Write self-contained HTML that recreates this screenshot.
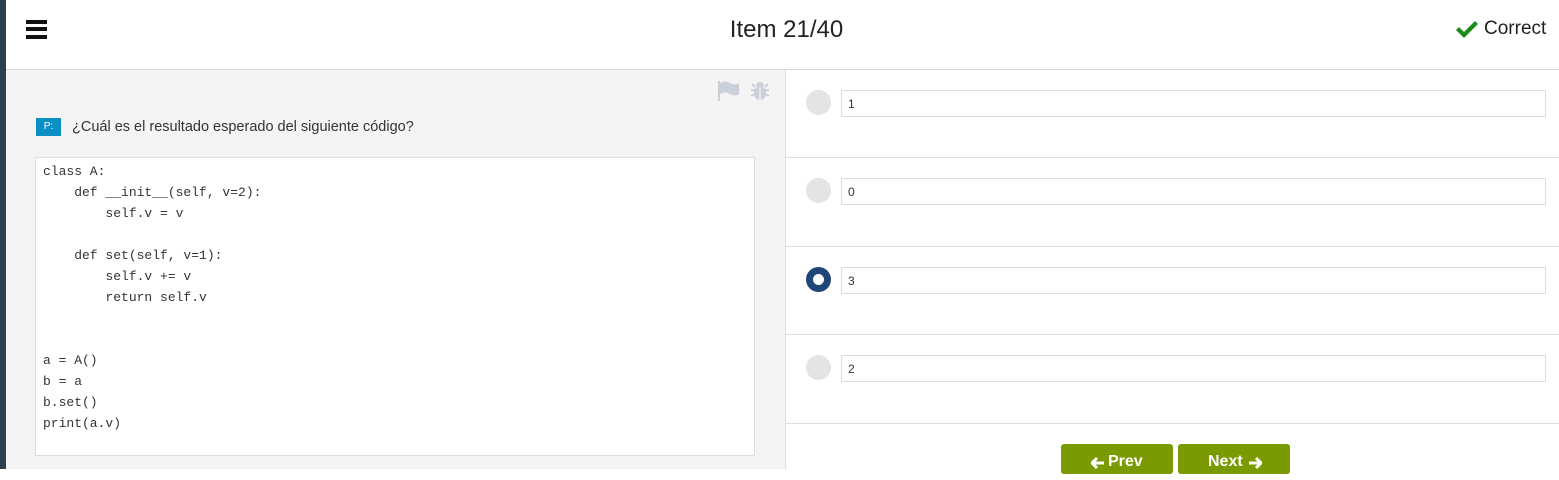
<!DOCTYPE html>
<html><head><meta charset="utf-8"><style>
body{margin:0;width:1559px;height:469px;overflow:hidden;background:#fff;font-family:"Liberation Sans",sans-serif;position:relative}
.abs{position:absolute}
.sb{left:0;top:0;width:6px;height:469px;background:#2c3e50}
.hdr{left:6px;top:0;width:1553px;height:69px;border-bottom:1px solid #d8d8d8;background:#fff}
.left{left:6px;top:70px;width:779px;height:399px;background:#f4f4f4;border-right:1px solid #ddd}
.code{left:35px;top:157px;width:720px;height:299px;background:#fff;border:1px solid #ddd;font-family:"Liberation Mono",monospace;font-size:13px;color:#333;white-space:pre;line-height:21px;padding:3px 0 0 7px;box-sizing:border-box}
.row{left:786px;width:773px;border-bottom:1px solid #ddd}
.rad{width:25px;height:25px;border-radius:50%;background:#e4e4e4;left:806px}
.inp{left:841px;width:705px;height:27px;border:1px solid #ddd;font-size:12px;line-height:26px;padding-left:6px;box-sizing:border-box;color:#333}
.btn{top:444px;width:112px;height:30px;background:#7a9a01;border-radius:3px;color:#fff;font-weight:bold;font-size:16px;line-height:36px}
.btn svg{position:absolute;top:13px}
</style></head><body>
<div class="abs sb"></div>
<div class="abs hdr"></div>
<div class="abs" style="left:26px;top:20px;width:21px;height:4px;background:#111"></div>
<div class="abs" style="left:26px;top:27px;width:21px;height:4px;background:#111"></div>
<div class="abs" style="left:26px;top:35px;width:21px;height:4px;background:#111"></div>
<div class="abs" style="left:0;width:1559px;top:16px;text-align:center;font-size:24px;color:#222;padding-left:14px;box-sizing:border-box">Item 21/40</div>
<svg class="abs" style="left:1455px;top:20px" width="24" height="20" viewBox="0 0 24 20"><path d="M1 10 L4 7 L9 12 L20 1 L23 4 L9 18 Z" fill="#1a8a1a"/></svg>
<div class="abs" style="left:1484px;top:18px;font-size:19px;color:#222">Correct</div>
<div class="abs left"></div>
<svg class="abs" style="left:717px;top:81px" width="24" height="20" viewBox="0 0 24 20"><rect x="1" y="0" width="2" height="20" fill="#c9d0da"/><path d="M3 2 Q8 -1 13 2 Q18 5 22 2 V13 Q18 16 13 13 Q8 10 3 13 Z" fill="#c9d0da"/></svg>
<svg class="abs" style="left:750px;top:80px" width="20" height="21" viewBox="0 0 20 21"><ellipse cx="10" cy="13" rx="6" ry="7" fill="#c9d0da"/><ellipse cx="10" cy="5" rx="4" ry="3" fill="#c9d0da"/><path d="M1 10H19M1 16L5 14M19 16L15 14M2 4L5 7M18 4L15 7" stroke="#c9d0da" stroke-width="2"/><rect x="9.3" y="7" width="1.4" height="13" fill="#f4f4f4"/></svg>
<div class="abs" style="left:36px;top:118px;width:25px;height:18px;background:#0a8fc4;color:#fff;font-size:10px;text-align:center;line-height:18px">P:</div>
<div class="abs" style="left:72px;top:119px;font-size:14.5px;color:#333">¿Cuál es el resultado esperado del siguiente código?</div>
<div class="abs code">class A:
    def __init__(self, v=2):
        self.v = v

    def set(self, v=1):
        self.v += v
        return self.v


a = A()
b = a
b.set()
print(a.v)</div>
<div class="abs row" style="top:70px;height:87px"></div>
<div class="abs row" style="top:158px;height:88px"></div>
<div class="abs row" style="top:247px;height:87px"></div>
<div class="abs row" style="top:335px;height:88px"></div>
<div class="abs rad" style="top:90px"></div><div class="abs inp" style="top:90px">1</div>
<div class="abs rad" style="top:178px"></div><div class="abs inp" style="top:178px">0</div>
<div class="abs rad" style="top:267px;background:#fff;border:7px solid #1f4579;box-sizing:border-box"></div><div class="abs inp" style="top:267px">3</div>
<div class="abs rad" style="top:355px"></div><div class="abs inp" style="top:355px">2</div>
<div class="abs btn" style="left:1061px"><svg style="left:30px" width="14" height="12" viewBox="0 0 14 12"><path d="M6 1 L1 6 L6 11 M1 6 H13" stroke="#fff" stroke-width="3" fill="none"/></svg><span style="position:absolute;left:47px">Prev</span></div>
<div class="abs btn" style="left:1178px"><span style="position:absolute;left:30px">Next</span><svg style="left:70px" width="14" height="12" viewBox="0 0 14 12"><path d="M8 1 L13 6 L8 11 M13 6 H1" stroke="#fff" stroke-width="3" fill="none"/></svg></div>
</body></html>
